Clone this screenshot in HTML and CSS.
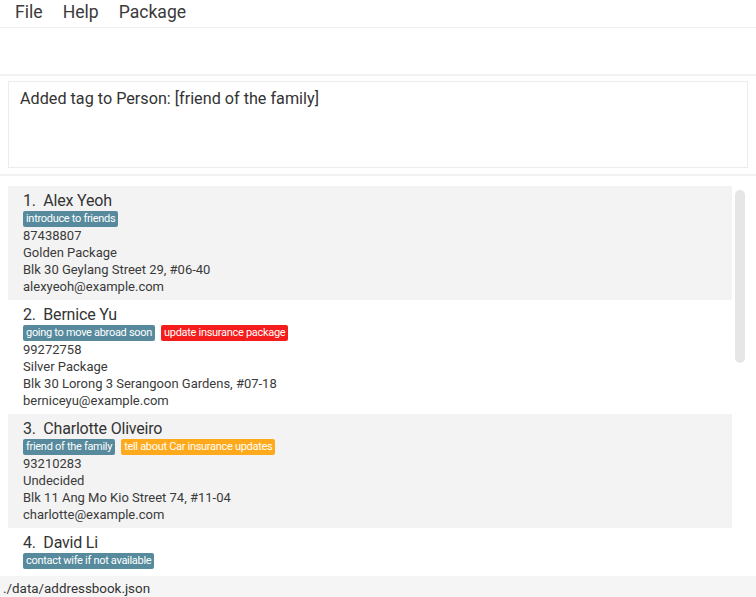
FILE: index.html
```html
<!DOCTYPE html>
<html>
<head>
<meta charset="utf-8">
<link rel="stylesheet" href="styles.css">
</head>
<body>
<div class="app">
  <div class="menubar">
    <span class="menu">File</span>
    <span class="menu">Help</span>
    <span class="menu">Package</span>
  </div>
  <div class="command"></div>
  <div class="sep"></div>
  <div class="result-wrap">
    <div class="result">Added tag to Person: [friend of the family]</div>
  </div>
  <div class="sep"></div>
  <div class="list-wrap">
    <div class="list">
      <div class="card odd">
        <div class="name">1.&nbsp;&nbsp;Alex Yeoh</div>
        <div class="tags"><span class="tag blue">introduce to friends</span></div>
        <div class="line">87438807</div>
        <div class="line">Golden Package</div>
        <div class="line">Blk 30 Geylang Street 29, #06-40</div>
        <div class="line">alexyeoh@example.com</div>
      </div>
      <div class="card">
        <div class="name">2.&nbsp;&nbsp;Bernice Yu</div>
        <div class="tags"><span class="tag blue">going to move abroad soon</span><span class="tag red">update insurance package</span></div>
        <div class="line">99272758</div>
        <div class="line">Silver Package</div>
        <div class="line">Blk 30 Lorong 3 Serangoon Gardens, #07-18</div>
        <div class="line">berniceyu@example.com</div>
      </div>
      <div class="card odd">
        <div class="name">3.&nbsp;&nbsp;Charlotte Oliveiro</div>
        <div class="tags"><span class="tag blue">friend of the family</span><span class="tag orange">tell about Car insurance updates</span></div>
        <div class="line">93210283</div>
        <div class="line">Undecided</div>
        <div class="line">Blk 11 Ang Mo Kio Street 74, #11-04</div>
        <div class="line">charlotte@example.com</div>
      </div>
      <div class="card last">
        <div class="name">4.&nbsp;&nbsp;David Li</div>
        <div class="tags"><span class="tag blue">contact wife if not available</span></div>
      </div>
    </div>
    <div class="scrollbar"><div class="thumb"></div></div>
  </div>
  <div class="status">./data/addressbook.json</div>
</div>
</body>
</html>
```
FILE: styles.css
```css
* { box-sizing: border-box; }
html, body { margin: 0; padding: 0; background: #fff; }
body {
  font-family: Roboto, "Liberation Sans", sans-serif;
  color: #333;
}
.app {
  width: 756px;
  height: 597px;
  display: flex;
  flex-direction: column;
  overflow: hidden;
}
.menubar {
  height: 28px;
  border-bottom: 1px solid #f0f0f0;
  display: flex;
  align-items: center;
  padding: 0 0 4px 15px;
  gap: 20px;
  font-size: 17.6px;
  color: #3a3a3a;
}
.command { height: 46px; }
.sep { height: 2px; background: #f2f2f2; flex: none; }
.result-wrap { padding: 5px 8px 6px 8px; }
.result {
  height: 87px;
  border: 1px solid #ececec;
  padding: 7px 11px;
  font-size: 16.2px;
  line-height: 20px;
  color: #333;
}
.list-wrap {
  flex: 1;
  display: flex;
  padding: 10px 0 0 8px;
  overflow: hidden;
  min-height: 0;
}
.list { width: 724px; flex: none; }
.card {
  height: 114px;
  padding: 5px 15px 5px 15px;
  overflow: hidden;
}
.card.last { height: auto; padding-bottom: 0; }
.card.odd { background: #f3f3f3; }
.name { font-size: 16px; line-height: 20px; color: #333; letter-spacing: -0.2px; }
.tags { display: flex; gap: 6px; height: 16px; }
.tag {
  font-size: 11px;
  line-height: 16px;
  height: 16px;
  padding: 0 3px;
  border-radius: 2px;
  color: #fff;
  letter-spacing: -0.3px;
}
.tag.blue { background: #568a9c; }
.tag.red { background: #f51c1c; }
.tag.orange { background: #ffaa1c; }
.line { font-size: 13px; line-height: 17px; color: #3a3a3a; }
.scrollbar { width: 24px; padding: 4px 0 0 3px; }
.thumb {
  width: 10px;
  height: 173px;
  background: #e6e6e6;
  border-radius: 5px;
}
.status {
  height: 21px;
  flex: none;
  background: #f5f5f5;
  padding: 4px 0 0 3px;
  font-size: 13.4px;
  line-height: 17px;
  color: #333;
}
```
